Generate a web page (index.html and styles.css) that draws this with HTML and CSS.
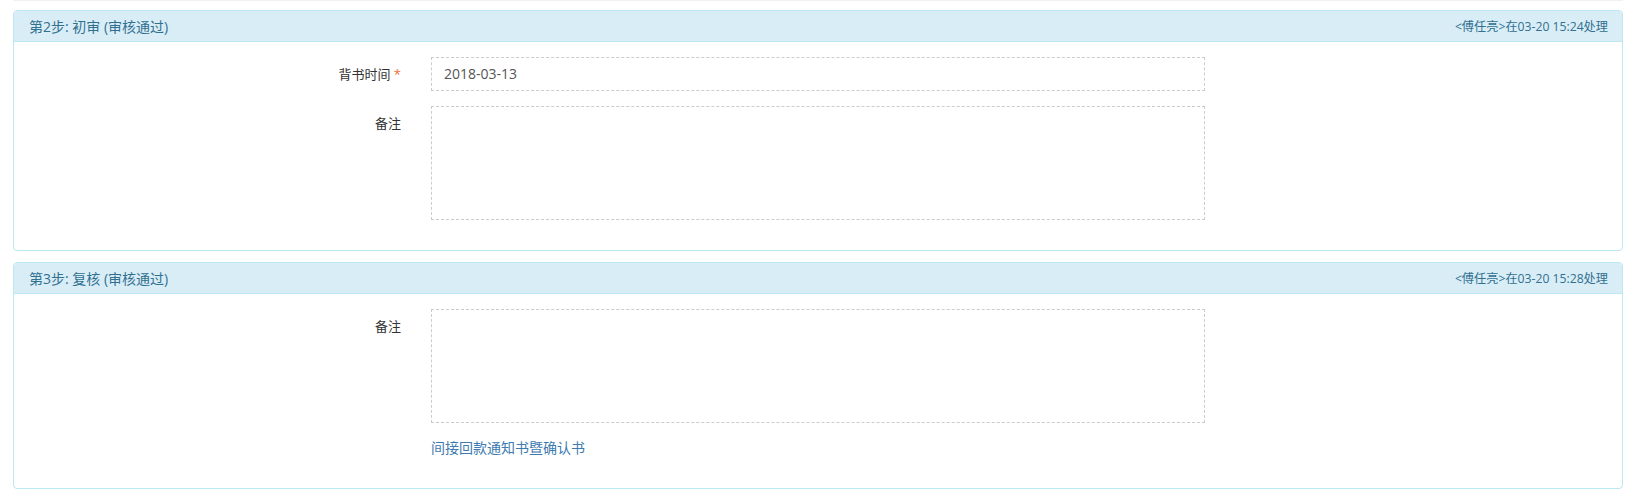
FILE: index.html
```html
<!DOCTYPE html>
<html lang="zh-CN">
<head>
<meta charset="utf-8">
<title>审核流程</title>
<link rel="stylesheet" href="styles.css">
</head>
<body>
<div class="page">
  <div class="tail"></div>

  <section class="panel">
    <header class="panel-heading">
      <span class="step-title">第2步: 初审 (审核通过)</span>
      <span class="step-meta">&lt;傅任亮&gt;在03-20 15:24处理</span>
    </header>
    <div class="panel-body">
      <div class="form-group">
        <div class="col-label"><span class="label">背书时间 <span class="req">*</span></span></div>
        <div class="col-field"><div class="field-input">2018-03-13</div></div>
      </div>
      <div class="form-group">
        <div class="col-label"><span class="label">备注</span></div>
        <div class="col-field"><div class="field-textarea"></div></div>
      </div>
    </div>
  </section>

  <section class="panel">
    <header class="panel-heading">
      <span class="step-title">第3步: 复核 (审核通过)</span>
      <span class="step-meta">&lt;傅任亮&gt;在03-20 15:28处理</span>
    </header>
    <div class="panel-body">
      <div class="form-group">
        <div class="col-label"><span class="label">备注</span></div>
        <div class="col-field"><div class="field-textarea"></div></div>
      </div>
      <div class="form-group">
        <div class="col-label"></div>
        <div class="col-field"><a class="doc-link" href="#">间接回款通知书暨确认书</a></div>
      </div>
    </div>
  </section>
</div>
</body>
</html>
```

FILE: styles.css
```css
* { box-sizing: border-box; }

html, body {
  margin: 0;
  padding: 0;
  background: #ffffff;
}

body {
  font-family: "Open Sans", "Noto Sans CJK SC", sans-serif;
  font-size: 13px;
  color: #333333;
}

.page {
  padding: 0 6px 0 13px;
}

.tail {
  height: 1px;
  margin-bottom: 9px;
  background: #eef2f4;
}

.panel {
  border: 1px solid #bce8f1;
  border-radius: 4px;
  margin-bottom: 11px;
  background: #ffffff;
}

.panel-heading {
  display: flex;
  justify-content: space-between;
  align-items: center;
  height: 31px;
  padding: 0 14px 0 15px;
  background: #d9edf7;
  border-bottom: 1px solid #bce8f1;
  border-radius: 3px 3px 0 0;
  color: #31708f;
}

.step-title {
  font-size: 14px;
}

.step-meta {
  font-size: 12.2px;
}

.panel-body {
  padding: 15px;
}

.form-group {
  display: grid;
  grid-template-columns: 25% 50% 25%;
  margin: 0 -15px 15px;
}

.col-label,
.col-field {
  padding: 0 15px;
}

.col-label {
  text-align: right;
  padding-top: 7px;
  line-height: 20px;
}

.label {
  color: #333333;
}

.req {
  color: #f26b3a;
}

.field-input {
  height: 34px;
  padding: 6px 12px;
  border: 1px dashed #cccccc;
  font-size: 14px;
  line-height: 20px;
  color: #555555;
}

.field-textarea {
  height: 114px;
  border: 1px dashed #cccccc;
}

.doc-link {
  display: block;
  font-size: 14px;
  line-height: 20px;
  color: #3d7ab0;
  text-decoration: none;
}
```
